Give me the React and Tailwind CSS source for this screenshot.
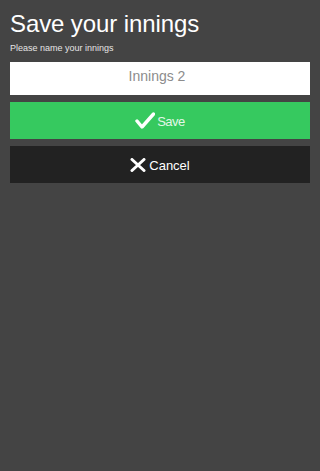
export default function App() {
  return (
    <div
      className="min-h-screen bg-[#444444] px-[10px] pt-[10px]"
      style={{ fontFamily: '"Liberation Sans", Arial, sans-serif' }}
    >
      <h1 className="text-[24px] leading-[28px] tracking-[-0.1px] text-white">Save your innings</h1>
      <p className="mt-[5px] text-[9px] leading-[11px] text-[#e4e4e4]">Please name your innings</p>

      <input
        defaultValue="Innings 2"
        className="mt-[8px] block h-[33px] w-full bg-white pb-[6px] pr-[6px] text-center text-[14px] text-[#8c8c8c] outline-none"
      />

      <button className="mt-[7px] flex h-[37px] w-full items-center justify-center gap-[2px] bg-[#36c95f] text-[13px] tracking-[-0.5px] text-[#e3f7e8]">
        <svg width="20" height="17" viewBox="0 0 20 17" fill="none">
          <path d="M2 9l5 6L18.5 2" stroke="#ffffff" strokeWidth="3.4" strokeLinecap="round" strokeLinejoin="round" />
        </svg>
        <span className="pt-[2px]">Save</span>
      </button>

      <button className="mt-[7px] flex h-[37px] w-full items-center justify-center gap-[3px] bg-[#222222] text-[13px] text-white">
        <svg width="16" height="14" viewBox="0 0 16 14" fill="none">
          <path d="M2 1.5l12 11M14 1.5l-12 11" stroke="#ffffff" strokeWidth="3" strokeLinecap="round" />
        </svg>
        <span className="pt-[2px]">Cancel</span>
      </button>
    </div>
  );
}
